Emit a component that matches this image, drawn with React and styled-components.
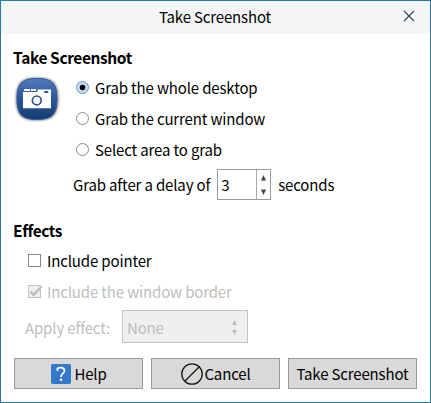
import React from "react";
import styled, { createGlobalStyle } from "styled-components";

const GlobalStyle = createGlobalStyle`
  html, body { margin: 0; padding: 0; }
  body { font: 15px/22px "Noto Sans CJK SC", "Noto Sans", sans-serif; letter-spacing: -0.15px; color: #000; }
  * { box-sizing: border-box; }
`;

const Dialog = styled.main`
  width: 431px;
  height: 403px;
  border: 1px solid #2a7b9b;
  background: #fff;
  display: flex;
  flex-direction: column;
  overflow: hidden;
  white-space: nowrap;
`;

const TitleBar = styled.header`
  height: 33px;
  flex: none;
  background: #f4f5f7;
  display: grid;
  grid-template-columns: 40px 1fr 40px;
  align-items: center;
  text-align: center;
`;

const Title = styled.span`
  padding: 0 1px 1px 0;
`;

const CloseButton = styled.button`
  border: 0;
  padding: 0;
  margin: 0 2px 3px 0;
  background: none;
  display: flex;
  justify-content: center;
`;

const Content = styled.div`
  padding: 13px 13px 0 12px;
`;

const Heading = styled.h2`
  margin: 0;
  height: 25px;
  font-size: 15.5px;
  line-height: 20px;
  font-weight: 700;
  letter-spacing: -0.4px;
`;

const GrabSection = styled.section`
  height: 173px;
`;

const GrabBody = styled.div`
  display: flex;
`;

const AppIcon = styled.svg`
  width: 48px;
  height: 50px;
  flex: none;
`;

const Options = styled.div`
  padding-left: 12px;
`;

const Choice = styled.label`
  display: flex;
  align-items: center;
  height: 31px;
  padding-left: ${(p) => p.$indent || "0"};
  color: ${(p) => (p.$disabled ? "#bebebe" : "#000")};
`;

const Radio = styled.span`
  width: 13px;
  height: 13px;
  margin: 0 6px 0 3px;
  border: 1px solid ${(p) => (p.$checked ? "#5c97d0" : "#8c8c8c")};
  border-radius: 50%;
  background: ${(p) => (p.$checked ? "radial-gradient(circle, #000 2.4px, #c3ddf6 3.2px)" : "#fff")};
`;

const Check = styled.span`
  display: flex;
  width: 13px;
  height: 13px;
  margin: 0 6px 0 0;
  border: 1px solid ${(p) => (p.$disabled ? "#c3c3c3" : "#888")};
  background: ${(p) => (p.$disabled ? "#eee" : "#fff")};
  svg { flex: none; margin: -1px; overflow: visible; }
`;

const DelayRow = styled.div`
  display: flex;
  align-items: center;
  height: 39px;
`;

const Spinner = styled.div`
  display: grid;
  grid-template-columns: 1fr 13px;
  width: 54px;
  height: 31px;
  margin: 0 7px 0 7px;
  border: 1px solid #999;
`;

const SpinValue = styled.span`
  padding: 4px 0 0 3px;
  border-right: 1px solid #aaa;
`;

const Arrows = styled.svg`
  display: block;
  fill: ${(p) => p.$color};
`;

const EffectRow = styled.div`
  display: flex;
  align-items: center;
  height: 33px;
  margin-top: 3px;
  padding-left: 12px;
  color: #bebebe;
`;

const EffectLabel = styled.span`
  padding-top: 2px;
`;

const Select = styled.div`
  display: flex;
  justify-content: space-between;
  align-items: center;
  width: 126px;
  height: 33px;
  margin-left: 12px;
  padding: 2px 5px 0 4px;
  border: 1px solid #c4c4c4;
  background: #efefef;
`;

const Actions = styled.footer`
  display: flex;
  gap: 8px;
  padding-left: 13px;
  margin-top: 15px;
`;

const ActionButton = styled.button`
  display: flex;
  align-items: center;
  justify-content: center;
  gap: ${(p) => p.$gap || "0"};
  width: 129px;
  height: 31px;
  padding: 0 0 0 ${(p) => (p.$gap ? "1px" : "0")};
  border: 1px solid #999;
  background: #d9d9d9;
  font: inherit;
  letter-spacing: inherit;
  color: #000;
`;

const CameraIcon = () => (
  <AppIcon viewBox="0 0 48 50">
    <defs>
      <linearGradient id="blue" x1="0" y1="0" x2="0" y2="1">
        <stop offset="0" stopColor="#5279bd" />
        <stop offset=".5" stopColor="#2c5597" />
        <stop offset="1" stopColor="#153b70" />
      </linearGradient>
      <filter id="shade" x="-20%" y="-20%" width="140%" height="140%">
        <feGaussianBlur stdDeviation="1" />
      </filter>
    </defs>
    <path d="M24 5.500C40 5.500 45.500 11 45.500 27S40 48.500 24 48.500S2.800 43 2.800 27S8 5.500 24 5.500Z" fill="#555" opacity=".7" filter="url(#shade)" />
    <path d="M24 6.500C39 6.500 44 11.500 44 27S39 47.500 24 47.500S4 42.500 4 27S9 6.500 24 6.500Z" fill="url(#blue)" stroke="#2f5da6" />
    <path d="M11 17h6v2h-6zM18 17h5v2h-5zM10 20h14.500v-2.500H38V36.300H10z" fill="#fff" />
    <path d="M31.300 19h4v2h-4z" fill="#2c5597" />
    <circle cx="23.800" cy="28.400" r="4.400" fill="#fff" stroke="#2b5392" strokeWidth="1.700" />
  </AppIcon>
);

export default function App() {
  return (
    <>
      <GlobalStyle />
      <Dialog>
        <TitleBar>
          <span />
          <Title>Take Screenshot</Title>
          <CloseButton aria-label="Close">
            <svg width="12" height="12" viewBox="0 0 12 12" fill="none" stroke="#41464b" strokeWidth="1.200">
              <path d="M1 1L11 11M11 1L1 11" />
            </svg>
          </CloseButton>
        </TitleBar>
        <Content>
          <GrabSection>
            <Heading>Take Screenshot</Heading>
            <GrabBody>
              <CameraIcon />
              <Options>
                <Choice><Radio $checked />Grab the whole desktop</Choice>
                <Choice><Radio />Grab the current window</Choice>
                <Choice><Radio />Select area to grab</Choice>
                <DelayRow>
                  Grab after a delay of
                  <Spinner>
                    <SpinValue>3</SpinValue>
                    <Arrows $color="#444" width="13" height="29" viewBox="0 0 13 29">
                      <path d="M4 10.500L6.500 5L9 10.500ZM4 19.500L6.500 25L9 19.500Z" />
                    </Arrows>
                  </Spinner>
                  seconds
                </DelayRow>
              </Options>
            </GrabBody>
          </GrabSection>
          <section>
            <Heading>Effects</Heading>
            <Choice $indent="15px"><Check />Include pointer</Choice>
            <Choice $indent="15px" $disabled>
              <Check $disabled>
                <svg width="13" height="13" fill="none" stroke="#bdbdbd" strokeWidth="2.200">
                  <path d="M2.500 6.500L5.500 10L13.500 1.500" />
                </svg>
              </Check>
              Include the window border
            </Choice>
            <EffectRow>
              <EffectLabel>Apply effect:</EffectLabel>
              <Select>
                None
                <Arrows $color="#bdbdbd" width="14" height="29" viewBox="0 0 14 29">
                  <path d="M4 12L6.500 7L9 12ZM4 17L6.500 22L9 17Z" />
                </Arrows>
              </Select>
            </EffectRow>
          </section>
        </Content>
        <Actions>
          <ActionButton $gap="3px">
            <svg width="20" height="20" viewBox="0 0 20 20">
              <rect width="20" height="20" rx="2" fill="#3478ca" />
              <path d="M6.500 7V4.500C7.500 3.300 13.500 2.700 13.500 7C13.500 9.500 10 9.500 10 13" fill="none" stroke="#fff" strokeWidth="1.700" />
              <circle cx="10" cy="15.700" r="1.300" fill="#fff" />
            </svg>
            Help
          </ActionButton>
          <ActionButton $gap="1px">
            <svg width="22" height="22" viewBox="0 0 22 22" fill="none" stroke="#151515" strokeWidth="1.300">
              <circle cx="11" cy="11" r="10.200" />
              <path d="M4 18L18 4" />
            </svg>
            Cancel
          </ActionButton>
          <ActionButton>Take Screenshot</ActionButton>
        </Actions>
      </Dialog>
    </>
  );
}
